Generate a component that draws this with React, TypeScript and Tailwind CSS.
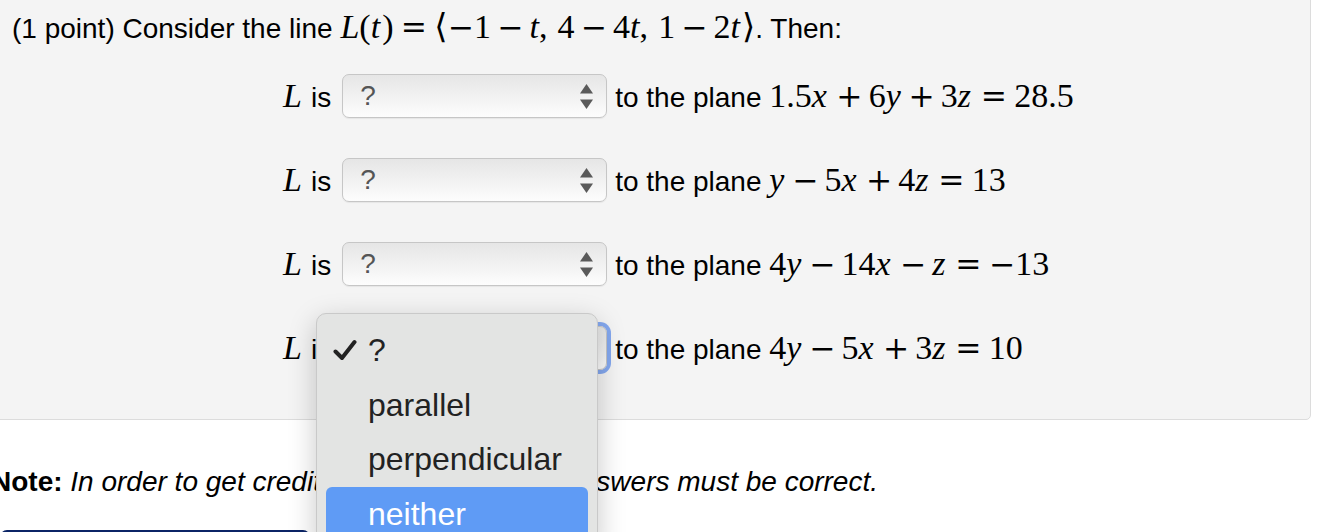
import type { ReactNode } from "react";

const sans = "font-['Liberation_Sans','Helvetica','Arial',sans-serif]";
const serif = "font-['Liberation_Serif','DejaVu_Serif','Times_New_Roman',serif]";
const opFont = "font-['DejaVu_Serif','Liberation_Serif',serif]";

function Math({ children }: { children: ReactNode }) {
  return <span className={`${serif} text-[34px] whitespace-nowrap`}>{children}</span>;
}

function V({ children, pad = "" }: { children: ReactNode; pad?: string }) {
  return <i className={`italic ${pad}`}>{children}</i>;
}

function Bin({ children }: { children: ReactNode }) {
  return (
    <span className="inline-block w-[1.13em] text-center">
      <span className={`${opFont} text-[0.92em]`}>{children}</span>
    </span>
  );
}

function Rel({ children }: { children: ReactNode }) {
  return (
    <span className="inline-block w-[1.2em] text-center">
      <span className={`${opFont} text-[0.92em]`}>{children}</span>
    </span>
  );
}

function Neg() {
  return (
    <span className="inline-block w-[0.78em] text-center">
      <span className={`${opFont} text-[0.92em]`}>−</span>
    </span>
  );
}

function Arrows() {
  return (
    <svg width="13" height="25" viewBox="0 0 13 25" className="shrink-0">
      <path d="M6.5 0 L13 9.5 L0 9.5 Z" fill="#5a5a5a" />
      <path d="M0 15.5 L13 15.5 L6.5 25 Z" fill="#5a5a5a" />
    </svg>
  );
}

function FakeSelect({ focused = false }: { focused?: boolean }) {
  return (
    <div
      className={`ml-[11px] flex h-[44px] w-[265px] shrink-0 items-center justify-between rounded-[7px] border border-[#c6c6c6] bg-gradient-to-b from-[#e6e6e6] via-[#f1f1f1] to-[#fdfdfd] pl-[17px] pr-[13px] text-[28px] text-[#555] ${
        focused ? "shadow-[0_0_0_4px_#84a8ef]" : "shadow-[0_1px_1px_rgba(0,0,0,0.06)]"
      }`}
    >
      <span className="leading-none">?</span>
      <Arrows />
    </div>
  );
}

function Row({ math, focused }: { math: ReactNode; focused?: boolean }) {
  return (
    <div className="flex h-[84px] items-center pl-[292px]">
      <span className="whitespace-nowrap text-[28px] leading-none">
        <span className={`${serif} text-[34px] italic`}>L</span>
        <span className="ml-[9px]">is</span>
      </span>
      <FakeSelect focused={focused} />
      <span className="ml-[8px] whitespace-nowrap text-[28px] leading-none">
        to the plane <Math>{math}</Math>
      </span>
    </div>
  );
}

const rows: ReactNode[] = [
  <>
    1.5<V pad="pr-[0.1em]">x</V>
    <Bin>+</Bin>6<V pad="pr-[0.05em]">y</V>
    <Bin>+</Bin>3<V pad="pr-[0.07em]">z</V>
    <Rel>=</Rel>28.5
  </>,
  <>
    <V pad="pr-[0.05em]">y</V>
    <Bin>−</Bin>5<V pad="pr-[0.1em]">x</V>
    <Bin>+</Bin>4<V pad="pr-[0.07em]">z</V>
    <Rel>=</Rel>13
  </>,
  <>
    4<V pad="pr-[0.05em]">y</V>
    <Bin>−</Bin>14<V pad="pr-[0.1em]">x</V>
    <Bin>−</Bin>
    <V pad="pr-[0.07em]">z</V>
    <Rel>=</Rel>
    <Neg />
    13
  </>,
  <>
    4<V pad="pr-[0.05em]">y</V>
    <Bin>−</Bin>5<V pad="pr-[0.1em]">x</V>
    <Bin>+</Bin>3<V pad="pr-[0.07em]">z</V>
    <Rel>=</Rel>10
  </>,
];

function CheckMark() {
  return (
    <svg width="24" height="22" viewBox="0 0 24 22" className="shrink-0">
      <path
        d="M2.5 12.5 L9 19 L21.5 3"
        fill="none"
        stroke="#222"
        strokeWidth="4"
        strokeLinecap="round"
        strokeLinejoin="round"
      />
    </svg>
  );
}

export default function App() {
  return (
    <div className={`relative h-[532px] w-[1322px] overflow-hidden bg-white text-black ${sans}`}>
      <div className="-mt-[10px] ml-[-10px] w-[1321px] rounded-[5px] border border-[#dcdcdc] bg-[#f4f4f4] pb-[29px] pt-[16px]">
        <p className="whitespace-nowrap pl-[21px] text-[28px] leading-[40px]">
          (1 point) Consider the line{" "}
          <Math>
            <V>L</V>(<V pad="pr-[0.06em]">t</V>)<Rel>=</Rel>⟨<Neg />1<Bin>−</Bin>
            <V>t</V>,<span className="inline-block w-[0.3em]" />4<Bin>−</Bin>4<V>t</V>,
            <span className="inline-block w-[0.3em]" />1<Bin>−</Bin>2<V pad="pr-[0.06em]">t</V>⟩
          </Math>
          . Then:
        </p>
        <div className="mt-[5px] flex flex-col">
          {rows.map((m, i) => (
            <Row key={i} math={m} focused={i === 3} />
          ))}
        </div>
      </div>

      <p className="ml-[-9px] mt-[42px] whitespace-nowrap text-[28px] leading-[40px]">
        <b className="font-bold">Note:</b>{" "}
        <i className="italic">In order to get credit for this problem all answers must be correct.</i>
      </p>

      <div className="mt-[28px] h-[40px] w-[310px] rounded-t-[7px] border-2 border-[#0b2466] bg-[#1f4290]" />

      <div className="absolute left-[316px] top-[313px] h-[240px] w-[282px] rounded-[10px] border border-[#c9c9c9] bg-[#e3e4e3] pt-[8px] text-[32px] text-[#222] shadow-[0_8px_28px_rgba(0,0,0,0.22)]">
        <div className="flex h-[55px] items-center pl-[16px]">
          <CheckMark />
          <span className="ml-[11px] leading-none">?</span>
        </div>
        <div className="flex h-[55px] items-center pl-[51px] leading-none">parallel</div>
        <div className="flex h-[54px] items-center pl-[51px] leading-none">perpendicular</div>
        <div className="mx-[9px] mt-[1px] flex h-[54px] items-center rounded-[6px] bg-[#5f9bf5] pl-[42px] leading-none text-white">
          neither
        </div>
      </div>
    </div>
  );
}
